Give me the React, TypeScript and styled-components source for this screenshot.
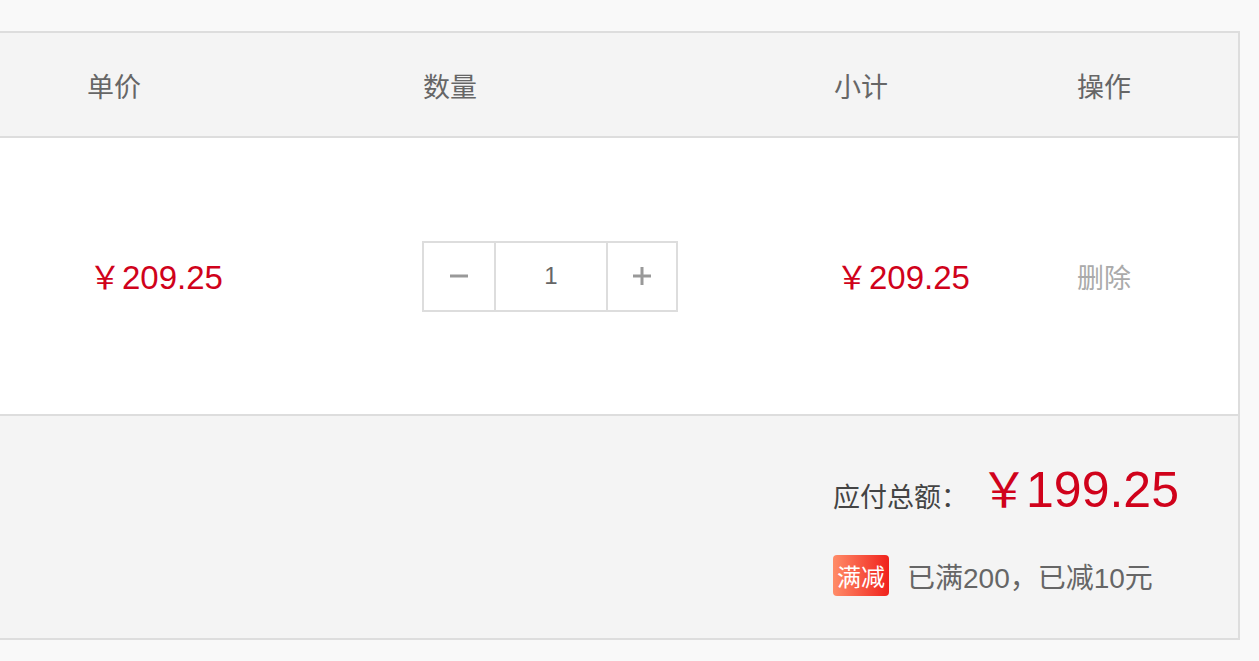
import React from "react";
import styled, { createGlobalStyle } from "styled-components";

const Global = createGlobalStyle`
  html, body { margin: 0; padding: 0; background: #f9f9f9; }
  body { font-family: "Liberation Sans", Arial, "Noto Sans CJK SC", sans-serif; }
  * { box-sizing: border-box; }
`;

const Page = styled.div`
  width: 1259px;
  height: 661px;
  padding-top: 31px;
  background: #f9f9f9;
  overflow: hidden;
`;

const Panel = styled.div`
  width: 1240px;
  border: 2px solid #dddddd;
  border-left: none;
`;

const Grid = styled.div<{ $bg: string; $h: number }>`
  display: grid;
  grid-template-columns: 87px 336px 411px 243px 1fr;
  align-items: center;
  height: ${(p) => p.$h}px;
  background: ${(p) => p.$bg};
  border-bottom: 2px solid #dddddd;
`;

const HeadCell = styled.div`
  font-family: "Noto Sans CJK SC", sans-serif;
  font-size: 27px;
  color: #666666;
  line-height: 1;
  padding-top: 2px;
`;

const Price = styled.div`
  font-size: 33px;
  color: #d0021b;
  line-height: 1;
  display: flex;
  align-items: baseline;
  padding-left: 2px;
`;

const Yen = styled.span<{ $size: number; $gap: number }>`
  font-family: "Noto Sans CJK SC", sans-serif;
  font-size: ${(p) => p.$size}px;
  margin-right: ${(p) => p.$gap}px;
`;

const Stepper = styled.div`
  display: flex;
  width: 256px;
  height: 71px;
  border: 2px solid #dddddd;
  margin-left: -1px;
`;

const StepBtn = styled.div<{ $w: number }>`
  width: ${(p) => p.$w}px;
  display: flex;
  align-items: center;
  justify-content: center;
  color: #999999;
`;

const StepInput = styled.div`
  width: 114px;
  border-left: 2px solid #dddddd;
  border-right: 2px solid #dddddd;
  display: flex;
  align-items: center;
  justify-content: center;
  font-size: 24px;
  color: #666666;
`;

const Action = styled.div`
  font-family: "Noto Sans CJK SC", sans-serif;
  font-size: 27px;
  color: #aaaaaa;
  line-height: 1;
`;

const Footer = styled.div`
  height: 222px;
  background: #f4f4f4;
  display: flex;
  justify-content: flex-end;
  padding: 40px 60px 0 0;
`;

const Summary = styled.div`
  display: flex;
  flex-direction: column;
  width: 345px;
`;

const TotalRow = styled.div`
  display: flex;
  align-items: baseline;
  height: 60px;
  margin-bottom: 39px;
  white-space: nowrap;
`;

const TotalLabel = styled.span`
  font-family: "Noto Sans CJK SC", sans-serif;
  font-size: 27px;
  color: #444444;
  margin-right: 12px;
  flex-shrink: 0;
`;

const TotalValue = styled.span`
  font-size: 50px;
  color: #d0021b;
  line-height: 60px;
  white-space: nowrap;
`;

const PromoRow = styled.div`
  display: flex;
  align-items: center;
  height: 41px;
  white-space: nowrap;
`;

const Badge = styled.span`
  width: 56px;
  height: 41px;
  border-radius: 4px;
  background: linear-gradient(90deg, #ff8c68 0%, #f0221c 100%);
  color: #ffffff;
  font-family: "Noto Sans CJK SC", sans-serif;
  font-size: 24px;
  display: flex;
  align-items: center;
  justify-content: center;
  margin-right: 18px;
  flex-shrink: 0;
`;

const PromoText = styled.span`
  font-family: "Liberation Sans", Arial, "Noto Sans CJK SC", sans-serif;
  font-size: 28px;
  color: #666666;
`;

const Minus = () => (
  <svg width="18" height="4" viewBox="0 0 18 4">
    <rect x="0" y="0.5" width="18" height="3" fill="#999" />
  </svg>
);

const Plus = () => (
  <svg width="18" height="18" viewBox="0 0 18 18">
    <rect x="0" y="7.5" width="18" height="3" fill="#999" />
    <rect x="7.5" y="0" width="3" height="18" fill="#999" />
  </svg>
);

export default function App() {
  return (
    <>
      <Global />
      <Page>
        <Panel>
          <Grid $bg="#f4f4f4" $h={105}>
            <span />
            <HeadCell>单价</HeadCell>
            <HeadCell>数量</HeadCell>
            <HeadCell>小计</HeadCell>
            <HeadCell>操作</HeadCell>
          </Grid>
          <Grid $bg="#ffffff" $h={278}>
            <span />
            <Price>
              <Yen $size={32} $gap={1}>￥</Yen>209.25
            </Price>
            <div>
              <Stepper>
                <StepBtn $w={70}>
                  <Minus />
                </StepBtn>
                <StepInput>1</StepInput>
                <StepBtn $w={68}>
                  <Plus />
                </StepBtn>
              </Stepper>
            </div>
            <Price>
              <Yen $size={32} $gap={1}>￥</Yen>209.25
            </Price>
            <Action>删除</Action>
          </Grid>
          <Footer>
            <Summary>
              <TotalRow>
                <TotalLabel>应付总额：</TotalLabel>
                <TotalValue>
                  <Yen $size={48} $gap={-2}>￥</Yen>199.25
                </TotalValue>
              </TotalRow>
              <PromoRow>
                <Badge>满减</Badge>
                <PromoText>已满200，已减10元</PromoText>
              </PromoRow>
            </Summary>
          </Footer>
        </Panel>
      </Page>
    </>
  );
}
